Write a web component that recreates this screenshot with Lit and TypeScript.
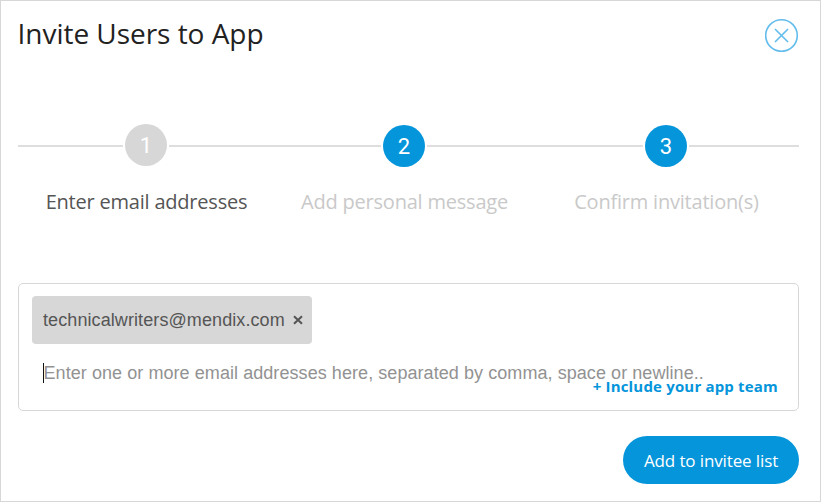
import { LitElement, html, css } from "lit";
import { customElement, property } from "lit/decorators.js";

@customElement("invite-step")
class InviteStep extends LitElement {
  @property({ type: Number }) number = 1;
  @property() label = "";
  @property({ type: Boolean, reflect: true }) active = false;

  static styles = css`
    :host {
      display: flex;
      flex-direction: column;
      align-items: center;
      --dot: #0595db;
      --label: #c9c9c9;
      --lift: 1px;
    }
    :host([active]) {
      --dot: #d7d7d7;
      --label: #555;
      --lift: 2px;
    }
    .rail {
      display: flex;
      align-items: center;
      align-self: stretch;
      gap: 2px;
      height: 44px;
    }
    .line {
      flex: 1;
      height: 2px;
      background: #dedede;
    }
    :host(:last-child) .line:last-child {
      box-shadow: 1px 0 #dedede;
    }
    .dot {
      width: 42px;
      height: 42px;
      margin-bottom: var(--lift);
      border-radius: 50%;
      background: var(--dot);
      color: #fff;
      font: 400 22px/44px Roboto, "Liberation Sans", sans-serif;
      text-align: center;
    }
    .label {
      margin: 20px 0 0 1px;
      font-size: 20px;
      line-height: 28px;
      letter-spacing: -0.21px;
      white-space: nowrap;
      color: var(--label);
    }
  `;

  render() {
    return html`
      <div class="rail">
        <span class="line"></span>
        <span class="dot">${this.number}</span>
        <span class="line"></span>
      </div>
      <div class="label">${this.label}</div>
    `;
  }
}

@customElement("app-root")
class AppRoot extends LitElement {
  static styles = css`
    :host {
      display: block;
      box-sizing: border-box;
      height: 502px;
      padding: 0 21px 0 17px;
      border: 1px solid #d7d7d7;
      background: #fff;
      font-family: "Open Sans", "Noto Sans", sans-serif;
    }
    .header {
      display: flex;
      justify-content: space-between;
      align-items: flex-start;
      height: 123px;
    }
    .title {
      margin: 12px 0 0 -0.5px;
      font-size: 28px;
      font-weight: 400;
      line-height: 40px;
      letter-spacing: -0.03px;
      color: #222;
    }
    .close {
      display: block;
      width: 34px;
      height: 34px;
      margin-top: 17px;
      fill: none;
      stroke: #62bcec;
      stroke-width: 1.6;
    }
    .steps {
      display: grid;
      grid-template-columns: 256px 260px 264px;
    }
    .entry {
      box-sizing: border-box;
      position: relative;
      height: 128px;
      margin-top: 67px;
      padding: 12px 13px;
      border: 1px solid #d7d7d7;
      border-radius: 5px;
      font: 18px/20px "Liberation Sans", Arial, sans-serif;
    }
    .chip {
      box-sizing: border-box;
      display: flex;
      align-items: center;
      justify-content: space-between;
      width: 280px;
      height: 48px;
      padding: 0 9px 0 11px;
      border-radius: 4px;
      background: #d7d7d7;
      color: #555;
      letter-spacing: 0.09px;
    }
    .remove {
      width: 10px;
      height: 10px;
      stroke: #555;
      stroke-width: 2;
    }
    .input {
      display: flex;
      align-items: center;
      margin: 19px 0 0 11px;
      height: 20px;
      color: #929292;
      letter-spacing: 0.065px;
      white-space: nowrap;
    }
    .caret {
      width: 1px;
      height: 20px;
      margin-right: -0.5px;
      background: #111;
    }
    .include {
      position: absolute;
      right: 20px;
      bottom: 14px;
      font: 700 15px/20px "Open Sans", "Noto Sans", sans-serif;
      letter-spacing: 0.18px;
      color: #0595db;
      white-space: nowrap;
    }
    .footer {
      display: flex;
      justify-content: flex-end;
      margin-top: 25px;
    }
    .submit {
      width: 176px;
      height: 48px;
      padding: 2px 0 0;
      border: 0;
      border-radius: 24px;
      background: #0595db;
      color: #fff;
      font: 17px/24px "Open Sans", "Noto Sans", sans-serif;
      letter-spacing: -0.12px;
      white-space: nowrap;
    }
  `;

  render() {
    return html`
      <div class="header">
        <h1 class="title">Invite Users to App</h1>
        <svg class="close" viewBox="0 0 34 34">
          <circle cx="16.5" cy="17.5" r="15.8" />
          <path d="M10 11 23 24M23 11 10 24" />
        </svg>
      </div>
      <div class="steps">
        <invite-step number="1" label="Enter email addresses" active></invite-step>
        <invite-step number="2" label="Add personal message"></invite-step>
        <invite-step number="3" label="Confirm invitation(s)"></invite-step>
      </div>
      <div class="entry">
        <div class="chip">
          <span>technicalwriters@mendix.com</span>
          <svg class="remove" viewBox="0 0 10 10"><path d="M1 1.2 9 8.8M9 1.2 1 8.8" /></svg>
        </div>
        <div class="input">
          <span class="caret"></span>
          <span>Enter one or more email addresses here, separated by comma, space or newline..</span>
        </div>
        <span class="include">+ Include your app team</span>
      </div>
      <div class="footer">
        <button class="submit">Add to invitee list</button>
      </div>
    `;
  }
}
